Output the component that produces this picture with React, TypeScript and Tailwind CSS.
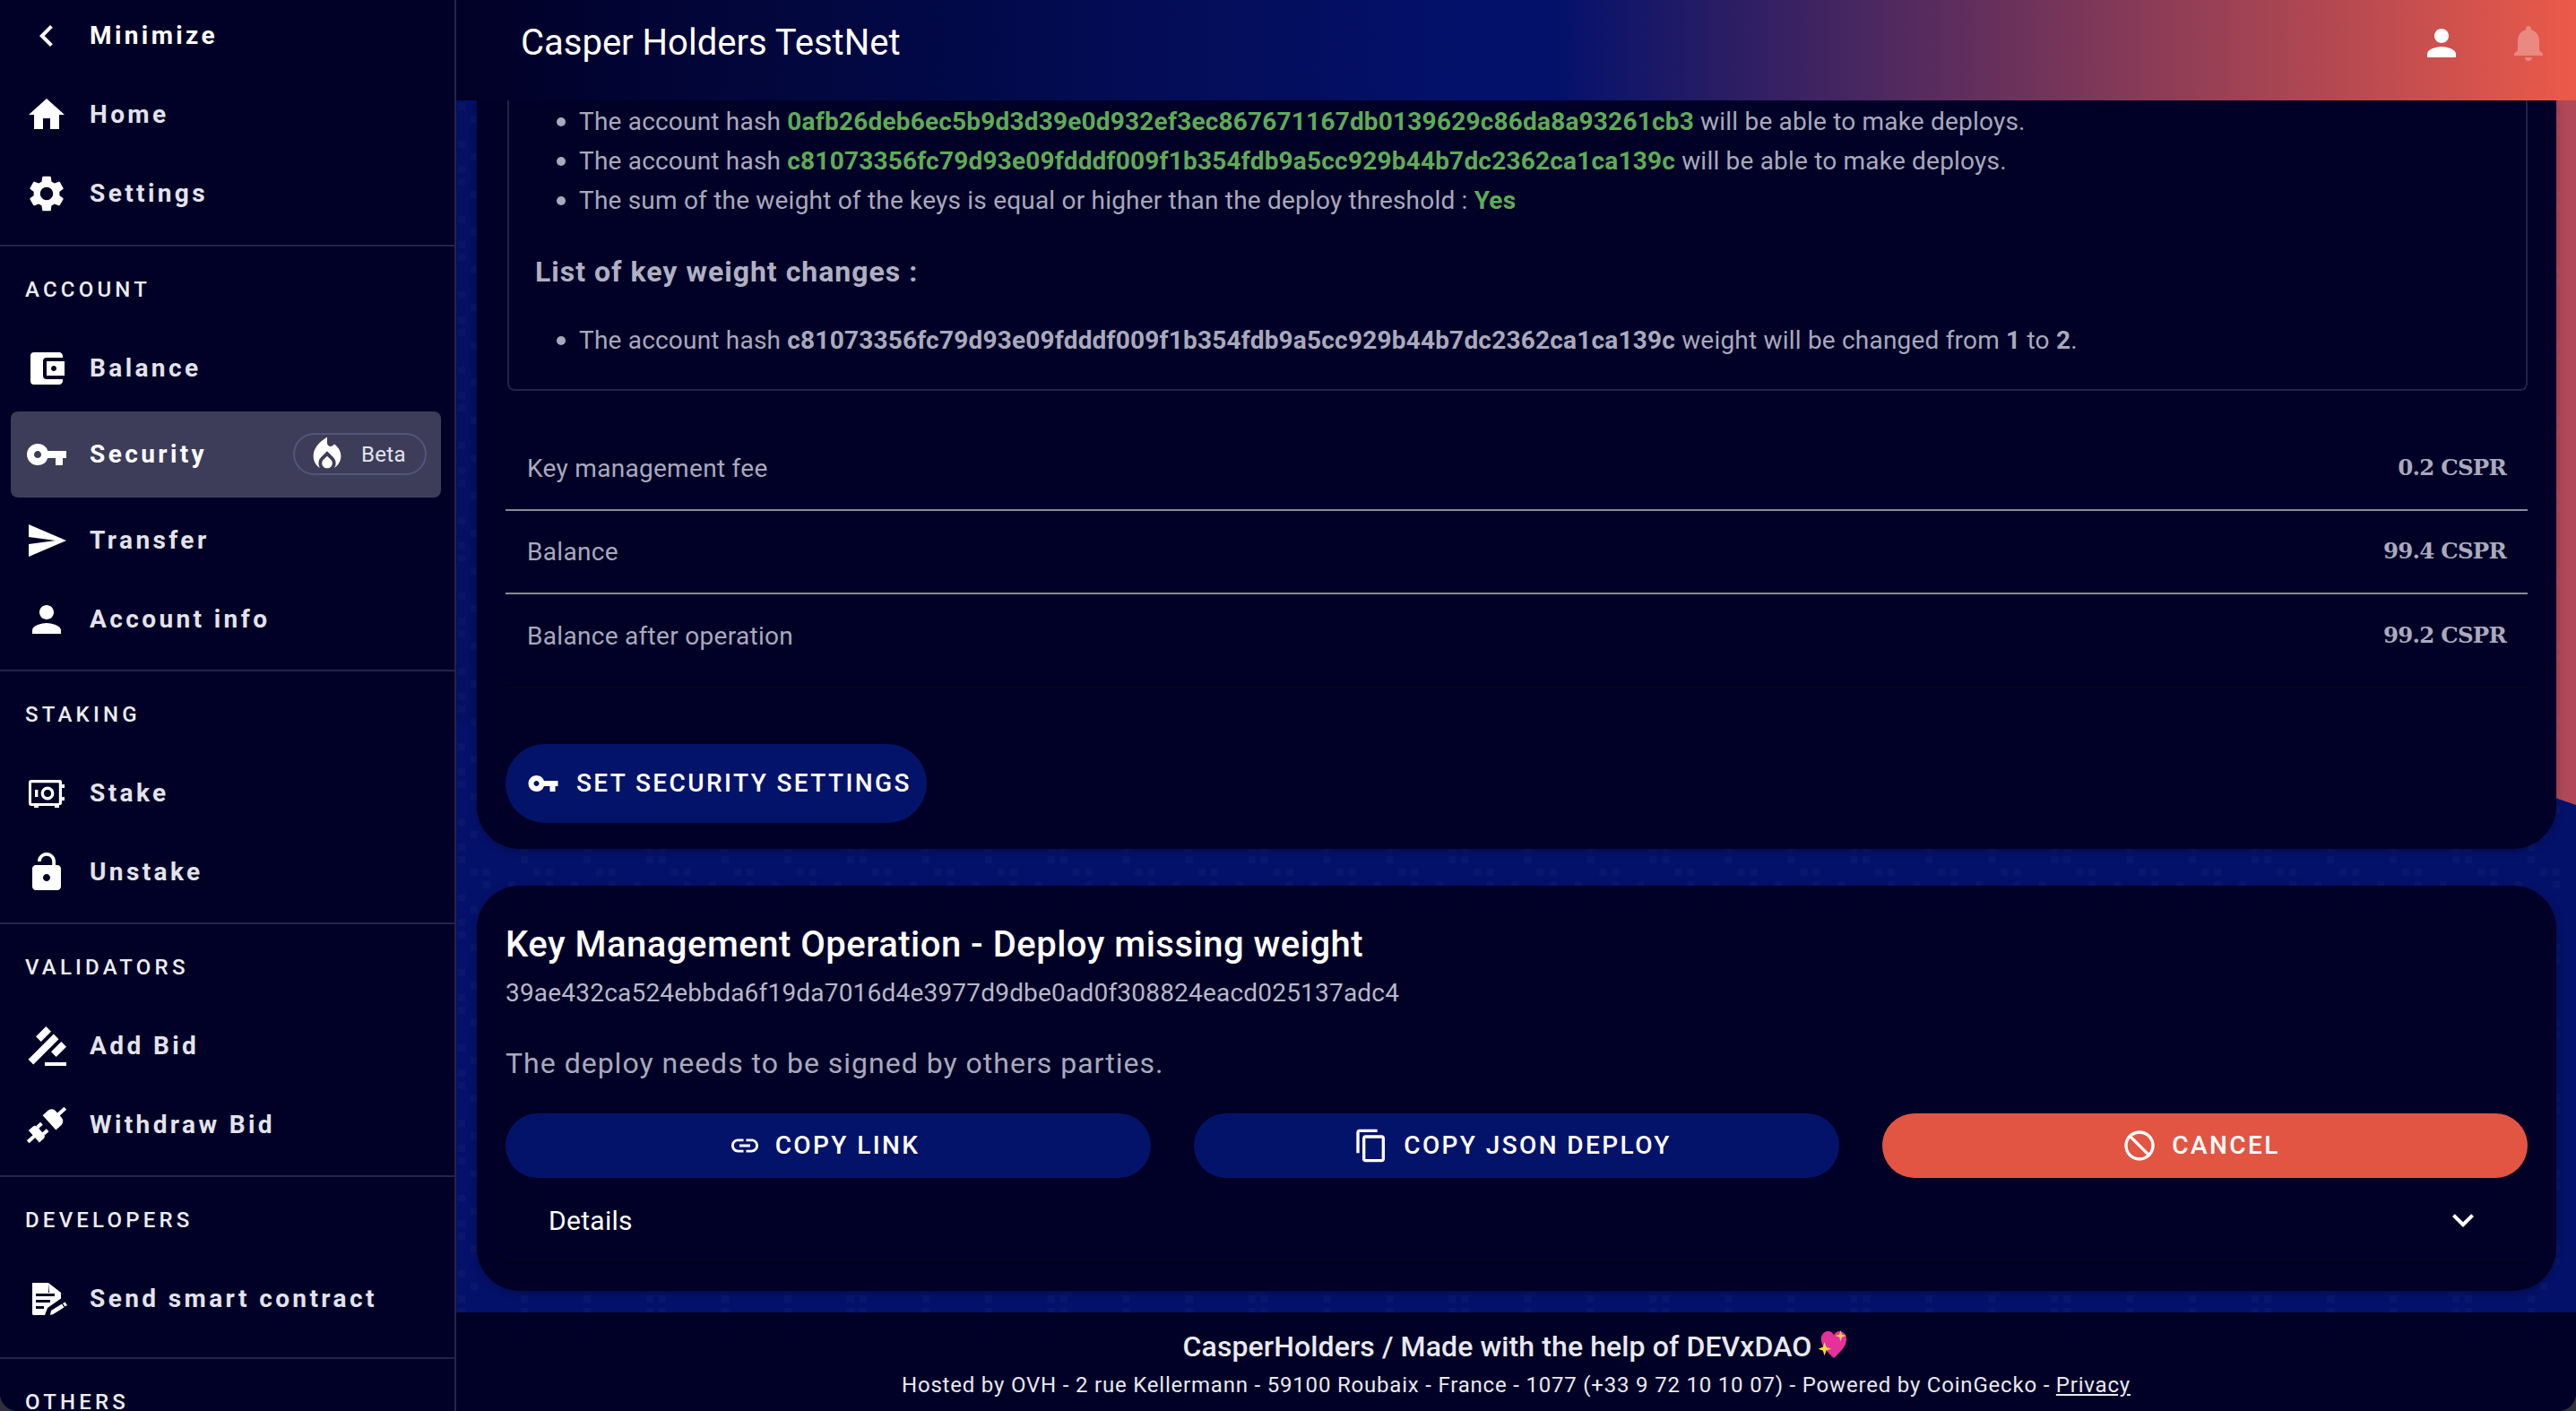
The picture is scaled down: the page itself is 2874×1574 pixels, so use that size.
import React from "react";
import {
  MdChevronLeft, MdHome, MdSettings, MdAccountBalanceWallet, MdVpnKey, MdSend, MdPerson,
  MdGavel, MdLink, MdContentCopy, MdDoNotDisturb, MdExpandMore, MdNotifications, MdLocalFireDepartment,
} from "react-icons/md";

const font = "font-['Roboto',sans-serif]";

function Safe() {
  return (
    <svg viewBox="0 0 24 24" className="w-[48px] h-[48px]" fill="currentColor">
      <path d="M3.500 4.500h16a1 1 0 0 1 1 1V7H22v2h-1.500v5H22v2h-1.500v1.500a1 1 0 0 1-1 1H19V20h-2.500v-1h-9v1H5v-1H3.500a1.500 1.500 0 0 1-1.500-1.500V6a1.500 1.500 0 0 1 1.500-1.500zm.2 1.600a.2.200 0 0 0-.2.200v11a.2.200 0 0 0 .2.200h15a.2.200 0 0 0 .2-.200v-11a.2.200 0 0 0-.2-.200z" fillRule="evenodd" />
      <path d="M5.500 10h1.700v4H5.500zM12.500 8.300a3.700 3.700 0 1 0 0 7.400 3.700 3.700 0 0 0 0-7.400zm0 1.700a2 2 0 1 1 0 4 2 2 0 0 1 0-4z" fillRule="evenodd" />
    </svg>
  );
}

function Doc() {
  return (
    <svg viewBox="0 0 24 24" className="w-[48px] h-[48px]" fill="currentColor">
      <path d="M4 3h9v5.500h.5L13 3l7 5.500v3.200L12.500 17l-1.500 4H4.800A.8.800 0 0 1 4 20.200zm2 9.500V14h8v-1.500zm0 3.500v1.500h4.500V16zM6 9v1.500h10.500V9z" fillRule="evenodd" />
      <path d="M14 21l.5-2.500 6-3.700 1.200 1.900-6 3.800zM21 14.500l1.300-.8L23.500 15.500l-1.300.8z" />
    </svg>
  );
}

function LockOpenFilled() {
  return (
    <svg viewBox="0 0 24 24" className="w-[48px] h-[48px]" fill="currentColor">
      <path d="M18 8H17V6c0-2.760-2.240-5-5-5S7 3.240 7 6h1.900c0-1.710 1.390-3.100 3.100-3.100s3.100 1.390 3.100 3.100v2H6c-1.100 0-2 .9-2 2v10c0 1.100.9 2 2 2h12c1.100 0 2-.9 2-2V10c0-1.100-.9-2-2-2zm-6 9c-1.100 0-2-.9-2-2s.9-2 2-2 2 .9 2 2-.9 2-2 2z" />
    </svg>
  );
}

function Unplug() {
  return (
    <svg viewBox="0 0 24 24" className="w-[48px] h-[48px] overflow-visible" fill="currentColor">
      <g transform="rotate(-42 12 12)">
        <path d="M-2 11h4.500v2H-2zM2.500 7.500h3a2 2 0 0 1 2 2v5a2 2 0 0 1-2 2h-3zM7.500 8.500h3v2h-3zM7.500 13.500h3v2h-3z" />
        <path d="M14 6.500h4a3 3 0 0 1 3 3v5a3 3 0 0 1-3 3h-4zM21 11h5v2h-5z" />
      </g>
    </svg>
  );
}

function Row({ icon, label, active, chip, bright }: { icon: React.ReactNode; label: string; active?: boolean; chip?: boolean; bright?: boolean }) {
  return (
    <div className={active ? "ml-[12px] mr-[15px] my-[4px] h-[96px] rounded-[8px] bg-[#3d3d59] flex items-center relative" : "ml-[12px] mr-[15px] h-[88px] flex items-center"}>
      <span className="w-[80px] flex justify-center shrink-0 text-white">{icon}</span>
      <span className={bright ? "ml-[8px] text-[28px] leading-none font-bold tracking-[3.400px] text-white whitespace-nowrap" : "ml-[8px] text-[28px] leading-none font-bold tracking-[3.400px] text-[#e3e3ec] whitespace-nowrap"}>{label}</span>
      {chip && (
        <span className="absolute left-[315px] top-[24px] w-[149px] h-[47px] rounded-full border-2 border-[#55557a] flex items-center">
          <MdLocalFireDepartment className="text-white w-[46px] h-[46px] ml-[13px]" />
          <span className="ml-[15px] text-[24px] text-[#e3e3ec] tracking-[0.300px]">Beta</span>
        </span>
      )}
    </div>
  );
}

function Section({ title, children, pb = 12 }: { title: string; children: React.ReactNode; pb?: number }) {
  return (
    <div className="border-t-2 border-[#24244a] pt-[34px]" style={{ paddingBottom: pb }}>
      <div className="h-[28px] leading-[28px] pl-[28px] text-[24px] font-medium tracking-[4.200px] text-[#ecedf3] mb-[30px]">{title}</div>
      {children}
    </div>
  );
}

const ic = "w-[48px] h-[48px]";

function Sidebar() {
  return (
    <aside className="w-[509px] shrink-0 h-full overflow-hidden bg-[#010127] border-r-2 border-[#24244a]">
      <div className="pb-[13px] -mt-[4px]">
        <Row icon={<MdChevronLeft className={ic} />} label="Minimize" bright />
        <Row icon={<MdHome className={ic} />} label="Home" />
        <Row icon={<MdSettings className={ic} />} label="Settings" />
      </div>
      <Section title="ACCOUNT">
        <Row icon={<MdAccountBalanceWallet className={ic} />} label="Balance" />
        <Row icon={<MdVpnKey className={ic} />} label="Security" active chip bright />
        <Row icon={<MdSend className={ic} />} label="Transfer" />
        <Row icon={<MdPerson className={ic} />} label="Account info" />
      </Section>
      <Section title="STAKING">
        <Row icon={<Safe />} label="Stake" />
        <Row icon={<LockOpenFilled />} label="Unstake" />
      </Section>
      <Section title="VALIDATORS">
        <Row icon={<MdGavel className={`${ic} -scale-x-100`} />} label="Add Bid" />
        <Row icon={<Unplug />} label="Withdraw Bid" />
      </Section>
      <Section title="DEVELOPERS" pb={21}>
        <Row icon={<Doc />} label="Send smart contract" />
      </Section>
      <div className="border-t-2 border-[#24244a] pt-[34px] h-[80px] overflow-visible">
        <div className="h-[28px] leading-[28px] pl-[28px] text-[24px] font-medium tracking-[4.200px] text-[#ecedf3]">OTHERS</div>
      </div>
    </aside>
  );
}

function Bullet({ children }: { children: React.ReactNode }) {
  return (
    <li className="h-[44px] leading-[44px] flex items-center whitespace-pre">
      <span className="w-[10px] h-[10px] rounded-full bg-[#a9a9bc] ml-[53px] mr-[15px]" />
      <span>{children}</span>
    </li>
  );
}

function FeeRow({ label, value, last }: { label: string; value: string; last?: boolean }) {
  return (
    <div className={last ? "h-[102px] pb-[7px] flex items-center justify-between px-[24px] border-b-2 border-[#00001c]" : "h-[93px] flex items-center justify-between px-[24px] border-b-2 border-[#8a8a98]"}>
      <span className="text-[28px] text-[#a9a9bc] tracking-[0.300px]">{label}</span>
      <span className="font-['DejaVu_Serif',serif] font-bold text-[24.500px] tracking-[-0.800px] text-[#aaaabd]">{value}</span>
    </div>
  );
}

function Btn({ icon, label, red }: { icon: React.ReactNode; label: string; red?: boolean }) {
  return (
    <div className={red ? "flex-1 h-[72px] pr-[9px] rounded-full bg-[#e25542] flex items-center justify-center gap-[16px] text-white" : "flex-1 h-[72px] pr-[9px] rounded-full bg-[#04136a] flex items-center justify-center gap-[16px] text-white"}>
      {icon}
      <span className="text-[28px] tracking-[2.400px] font-medium">{label}</span>
    </div>
  );
}

function Heart() {
  return (
    <svg viewBox="0 0 36 36" className="inline-block w-[34px] h-[34px] ml-[8px] align-[-4px]">
      <path d="M18 34C10 26 3 20 3 11c0-5 4-9 8-9 3.500 0 6 2 7 5 1-3 3.500-5 7-5 4 0 8 4 8 9 0 9-7 15-15 23z" fill="#e5329a" />
      <path d="M26 1l1.500 5 5 1.500-5 1.500L26 14l-1.500-5-5-1.500 5-1.500z" fill="#ffd93b" />
      <path d="M7 15l2 6 6 2-6 2-2 6-2-6-6-2 6-2z" fill="#ffd93b" />
    </svg>
  );
}

const dots: number[][] = [];
for (let r = 0; r < 6; r++) {
  for (let c = 0; c < 16; c++) {
    if (((r * 7 + c * c * 3 + c * 5 + r * c) % 5) < 2) dots.push([c * 14 + 2, r * 14 + 3]);
  }
}

function Background() {
  return (
    <svg className="absolute inset-0 w-full h-full" viewBox="0 0 2366 1352" preserveAspectRatio="none">
      <defs>
        <pattern id="dotgrid" width="224" height="84" patternUnits="userSpaceOnUse">
          {dots.map(([x, y], i) => (
            <rect key={i} x={x} y={y} width="8" height="8" fill="#ffffff" opacity="0.025" />
          ))}
        </pattern>
      </defs>
      <rect width="2366" height="1352" fill="#04116a" />
      <path d="M1800 0H2366V786L1800 590z" fill="#b0485a" />
      <path d="M0 0V693C150 738 300 759 432 759 530 759 640 748 720 728V0z" fill="#031063" />
      <rect width="2366" height="1352" fill="url(#dotgrid)" />
    </svg>
  );
}

export default function App() {
  return (
    <div className="w-[2874px] h-[1574px] bg-[#30303c]">
      <div className={`${font} w-full h-full flex overflow-hidden rounded-b-[20px] bg-[#010127]`}>
        <Sidebar />
        <div className="flex-1 h-full flex flex-col min-w-0">
          <header className="h-[112px] shrink-0 relative z-10 flex items-center pl-[72px] pr-[29px] bg-[linear-gradient(90deg,#010127_0%,#04116a_47%,#04116a_52%,#eb5a49_100%)]">
            <h1 className="text-[40px] text-white font-normal flex-1 -mt-[16px]">Casper Holders TestNet</h1>
            <MdPerson className="text-white w-[48px] h-[48px] -mt-[16px] mr-[49px]" />
            <MdNotifications className="text-white/30 w-[48px] h-[48px] -mt-[16px]" />
          </header>
          <main className="flex-1 min-h-0 relative overflow-hidden pl-[23px] pr-[22px]">
            <Background />
            <div className="relative">
              <section className="h-[835px] rounded-b-[48px] bg-[#010127] px-[32px] overflow-hidden shadow-[0_2px_8px_rgba(0,0,0,0.3)]">
                <div className="ml-[2px] h-[324px] rounded-b-[8px] border-x-2 border-b-2 border-[#22224a] text-[28px] text-[#a9a9bc] tracking-[0.200px] pt-[2px]">
                  <ul>
                    <Bullet>The account hash <b className="text-[#5eab58] font-bold">0afb26deb6ec5b9d3d39e0d932ef3ec867671167db0139629c86da8a93261cb3</b> will be able to make deploys.</Bullet>
                    <Bullet>The account hash <b className="text-[#5eab58] font-bold">c81073356fc79d93e09fdddf009f1b354fdb9a5cc929b44b7dc2362ca1ca139c</b> will be able to make deploys.</Bullet>
                    <Bullet>The sum of the weight of the keys is equal or higher than the deploy threshold : <b className="text-[#5eab58] font-bold">Yes</b></Bullet>
                  </ul>
                  <h3 className="mt-[35px] ml-[29px] text-[32px] leading-[44px] font-bold text-[#b0b0c2] tracking-[1px]">List of key weight changes :</h3>
                  <ul className="mt-[33px]">
                    <Bullet>The account hash <b className="font-bold">c81073356fc79d93e09fdddf009f1b354fdb9a5cc929b44b7dc2362ca1ca139c</b> weight will be changed from <b className="font-bold">1</b> to <b className="font-bold">2</b>.</Bullet>
                  </ul>
                </div>
                <div className="mt-[41px] w-full">
                  <FeeRow label="Key management fee" value="0.2 CSPR" />
                  <FeeRow label="Balance" value="99.4 CSPR" />
                  <FeeRow label="Balance after operation" value="99.2 CSPR" last />
                </div>
                <div className="mt-[65px] w-[470px] h-[88px] rounded-full bg-[#04136a] text-white flex items-center pl-[24px]">
                  <MdVpnKey className="w-[36px] h-[36px]" />
                  <span className="ml-[19px] text-[28px] tracking-[2.400px] font-medium whitespace-nowrap">SET SECURITY SETTINGS</span>
                </div>
              </section>
              <section className="mt-[41px] h-[452px] rounded-[48px] bg-[#010127] px-[32px] pt-[42px] shadow-[0_2px_8px_rgba(0,0,0,0.3)]">
                <h2 className="text-[40px] leading-[48px] font-medium text-white tracking-[0.500px]">Key Management Operation - Deploy missing weight</h2>
                <div className="mt-[14px] text-[28px] leading-[32px] text-[#b8b8c8] tracking-[0.200px]">39ae432ca524ebbda6f19da7016d4e3977d9dbe0ad0f308824eacd025137adc4</div>
                <div className="mt-[40px] text-[32px] leading-[44px] text-[#a9a9bc] tracking-[1px]">The deploy needs to be signed by others parties.</div>
                <div className="mt-[34px] flex gap-[48px]">
                  <Btn icon={<MdLink className="w-[36px] h-[36px]" />} label="COPY LINK" />
                  <Btn icon={<MdContentCopy className="w-[40px] h-[40px]" />} label="COPY JSON DEPLOY" />
                  <Btn icon={<MdDoNotDisturb className="w-[40px] h-[40px]" />} label="CANCEL" red />
                </div>
                <div className="h-[96px] flex items-center justify-between border-b-2 border-[#00001a] pl-[48px] pr-[48px]">
                  <span className="text-[30px] text-white tracking-[0.300px]">Details</span>
                  <MdExpandMore className="w-[48px] h-[48px] text-white" />
                </div>
              </section>
            </div>
          </main>
          <footer className="h-[110px] shrink-0 relative bg-[#010127] flex flex-col items-center pt-[19px]">
            <div className="text-[32px] leading-[38px] font-medium text-[#e8e9ef] tracking-[0.100px] whitespace-nowrap">CasperHolders / Made with the help of DEVxDAO<Heart /></div>
            <div className="mt-[10px] text-[24px] leading-[28px] text-[#e8e9ef] tracking-[0.800px] whitespace-nowrap">Hosted by OVH - 2 rue Kellermann - 59100 Roubaix - France - 1077 (+33 9 72 10 10 07) - Powered by CoinGecko - <span className="underline">Privacy</span></div>
          </footer>
        </div>
      </div>
    </div>
  );
}
